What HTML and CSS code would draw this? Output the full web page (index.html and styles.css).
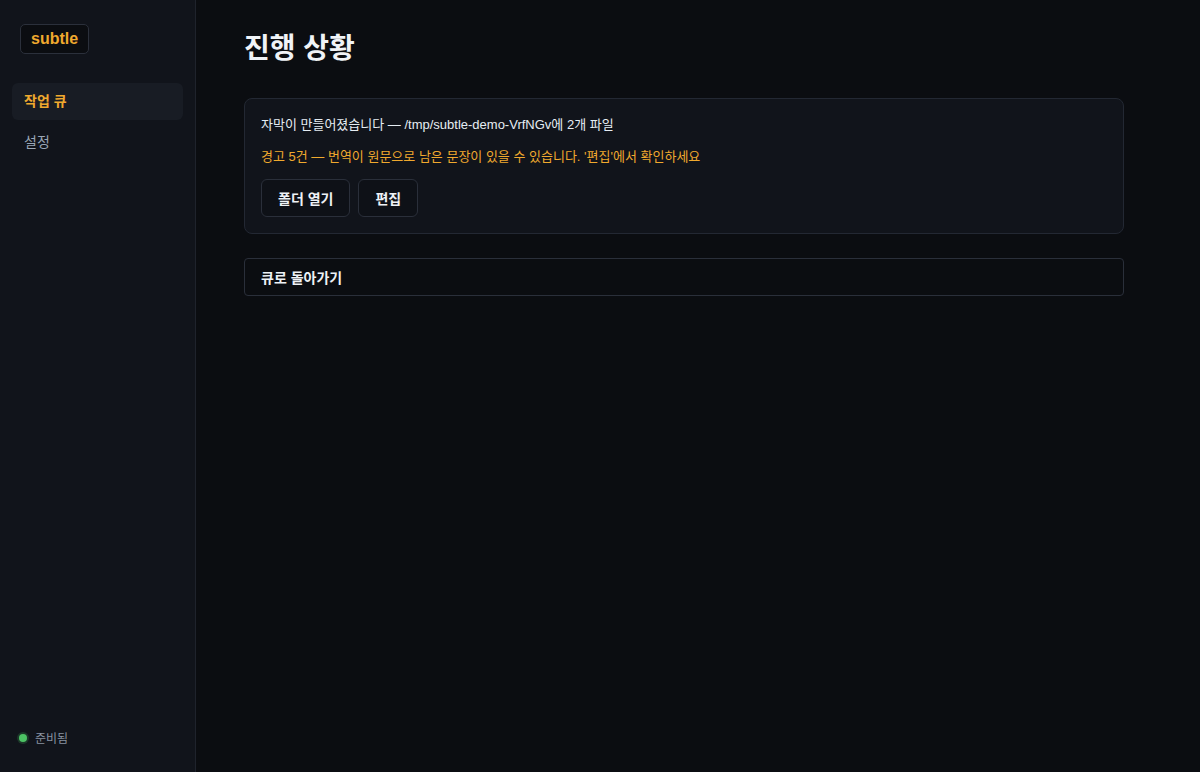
FILE: index.html
```html
<!DOCTYPE html>
<html lang="ko">
<head>
  <meta charset="UTF-8">
  <meta name="viewport" content="width=device-width, initial-scale=1.0">
  <title>subtle</title>
  <link rel="stylesheet" href="styles.css">
</head>
<body>
  <div class="app">
    <aside class="sidebar">
      <div class="logo">subtle</div>

      <nav class="nav">
        <a class="nav-item active" href="#">작업 큐</a>
        <a class="nav-item" href="#">설정</a>
      </nav>

      <div class="status">
        <span class="status-dot"></span>
        <span class="status-text">준비됨</span>
      </div>
    </aside>

    <main class="main">
      <h1>진행 상황</h1>

      <div class="result-card">
        <p class="result-text">자막이 만들어졌습니다 — /tmp/subtle-demo-VrfNGv에 2개 파일</p>
        <p class="result-warning">경고 5건 — 번역이 원문으로 남은 문장이 있을 수 있습니다. '편집'에서 확인하세요</p>
        <div class="result-actions">
          <button class="btn">폴더 열기</button>
          <button class="btn">편집</button>
        </div>
      </div>

      <button class="back-button">큐로 돌아가기</button>
    </main>
  </div>
</body>
</html>
```

FILE: styles.css
```css
* {
  box-sizing: border-box;
}

body {
  margin: 0;
  font-family: 'Liberation Sans', 'Noto Sans CJK KR', sans-serif;
  background-color: #0b0d11;
  color: #e6edf3;
}

.app {
  display: flex;
  height: 772px;
}

.sidebar {
  width: 196px;
  flex-shrink: 0;
  display: flex;
  flex-direction: column;
  padding: 24px 12px 26px;
  background-color: #11141b;
  border-right: 1px solid #1f232c;
}

.logo {
  align-self: flex-start;
  margin-left: 8px;
  height: 30px;
  padding: 0 10px;
  line-height: 28px;
  font-size: 16px;
  font-weight: bold;
  color: #f0a92e;
  background-color: #0b0d11;
  border: 1px solid #2b303b;
  border-radius: 5px;
}

.nav {
  display: flex;
  flex-direction: column;
  gap: 4px;
  margin-top: 29px;
}

.nav-item {
  height: 37px;
  padding: 0 12px;
  line-height: 37px;
  font-size: 14px;
  color: #9aa6b6;
  text-decoration: none;
  border-radius: 6px;
}

.nav-item.active {
  font-weight: bold;
  color: #f0a92e;
  background-color: #181c24;
}

.status {
  display: flex;
  align-items: center;
  gap: 8px;
  margin-top: auto;
  padding-left: 7px;
}

.status-dot {
  width: 8px;
  height: 8px;
  border-radius: 50%;
  background-color: #4cc264;
  box-shadow: 0 0 0 2px rgba(76, 194, 100, 0.2);
}

.status-text {
  font-size: 12px;
  color: #8892a0;
}

.main {
  flex: 1;
  padding: 32px 76px 32px 48px;
}

h1 {
  margin: 0 0 32px;
  font-size: 28px;
  line-height: 34px;
  font-weight: bold;
  color: #f0f3f7;
}

.result-card {
  padding: 16px;
  background-color: #11141b;
  border: 1px solid #232833;
  border-radius: 8px;
}

.result-text,
.result-warning {
  margin: 0;
  font-size: 13px;
  line-height: 20px;
}

.result-text {
  color: #e6edf3;
}

.result-warning {
  margin-top: 12px;
  color: #f0a92e;
}

.result-actions {
  display: flex;
  gap: 8px;
  margin-top: 12px;
}

.btn {
  height: 38px;
  padding: 0 16px;
  font-family: inherit;
  font-size: 14px;
  font-weight: bold;
  color: #eef2f6;
  background-color: #0e1117;
  border: 1px solid #2a2f3a;
  border-radius: 6px;
  cursor: pointer;
}

.back-button {
  display: block;
  width: 100%;
  height: 38px;
  margin-top: 24px;
  padding: 0 16px;
  text-align: left;
  font-family: inherit;
  font-size: 14px;
  font-weight: bold;
  color: #eef2f6;
  background-color: transparent;
  border: 1px solid #2a2f3a;
  border-radius: 4px;
  cursor: pointer;
}
```
